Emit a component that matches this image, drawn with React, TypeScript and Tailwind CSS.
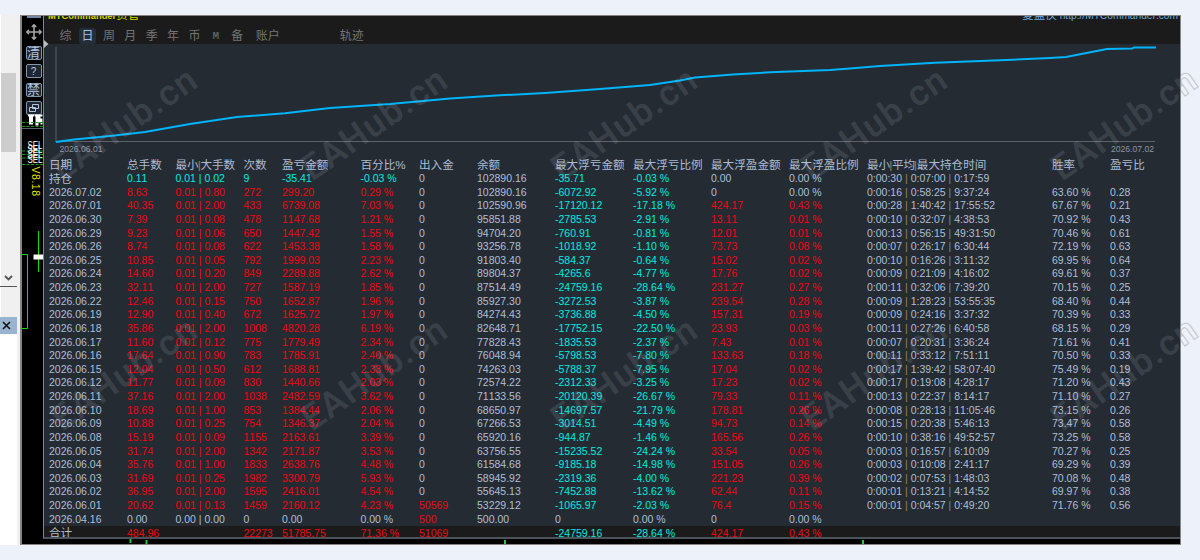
import React from "react";

const COLS =
  "grid grid-cols-[78px_48.5px_68px_38.5px_78.5px_58.5px_58px_78px_78px_78px_78px_78px_185px_58px_70px] pl-[5px] whitespace-nowrap";

const HEADERS = [
  "日期", "总手数", "最小|大手数", "次数", "盈亏金额", "百分比%", "出入金", "余额",
  "最大浮亏金额", "最大浮亏比例", "最大浮盈金额", "最大浮盈比例", "最小|平均|最大持仓时间", "胜率", "盈亏比",
];

// date, lots, max lot, trades, profit, percent, deposit, balance, dd, dd %, float profit, float %, time, win rate, ratio
const DATA = `2026.07.02,8.63,0.80,272,299.20,0.29,0,102890.16,-6072.92,-5.92,0,0.00,0:00:16|0:58:25|9:37:24,63.60,0.28
2026.07.01,40.35,2.00,433,6739.08,7.03,0,102590.96,-17120.12,-17.18,424.17,0.43,0:00:28|1:40:42|17:55:52,67.67,0.21
2026.06.30,7.39,0.08,478,1147.68,1.21,0,95851.88,-2785.53,-2.91,13.11,0.01,0:00:10|0:32:07|4:38:53,70.92,0.43
2026.06.29,9.23,0.06,650,1447.42,1.55,0,94704.20,-760.91,-0.81,12.01,0.01,0:00:13|0:56:15|49:31:50,70.46,0.61
2026.06.26,8.74,0.08,622,1453.38,1.58,0,93256.78,-1018.92,-1.10,73.73,0.08,0:00:07|0:26:17|6:30:44,72.19,0.63
2026.06.25,10.85,0.05,792,1999.03,2.23,0,91803.40,-584.37,-0.64,15.02,0.02,0:00:10|0:16:26|3:11:32,69.95,0.64
2026.06.24,14.60,0.20,849,2289.88,2.62,0,89804.37,-4265.6,-4.77,17.76,0.02,0:00:09|0:21:09|4:16:02,69.61,0.37
2026.06.23,32.11,2.00,727,1587.19,1.85,0,87514.49,-24759.16,-28.64,231.27,0.27,0:00:11|0:32:06|7:39:20,70.15,0.25
2026.06.22,12.46,0.15,750,1652.87,1.96,0,85927.30,-3272.53,-3.87,239.54,0.28,0:00:09|1:28:23|53:55:35,68.40,0.44
2026.06.19,12.90,0.40,672,1625.72,1.97,0,84274.43,-3736.88,-4.50,157.31,0.19,0:00:09|0:24:16|3:37:32,70.39,0.33
2026.06.18,35.86,2.00,1008,4820.28,6.19,0,82648.71,-17752.15,-22.50,23.93,0.03,0:00:11|0:27:26|6:40:58,68.15,0.29
2026.06.17,11.60,0.12,775,1779.49,2.34,0,77828.43,-1835.53,-2.37,7.43,0.01,0:00:07|0:20:31|3:36:24,71.61,0.41
2026.06.16,17.64,0.90,783,1785.91,2.40,0,76048.94,-5798.53,-7.80,133.63,0.18,0:00:11|0:33:12|7:51:11,70.50,0.33
2026.06.15,12.04,0.50,612,1688.81,2.33,0,74263.03,-5788.37,-7.95,17.04,0.02,0:00:17|1:39:42|58:07:40,75.49,0.19
2026.06.12,11.77,0.09,830,1440.66,2.03,0,72574.22,-2312.33,-3.25,17.23,0.02,0:00:17|0:19:08|4:28:17,71.20,0.43
2026.06.11,37.16,2.00,1038,2482.59,3.62,0,71133.56,-20120.39,-26.67,79.33,0.11,0:00:13|0:22:37|8:14:17,71.10,0.27
2026.06.10,18.69,1.00,853,1384.44,2.06,0,68650.97,-14697.57,-21.79,178.81,0.26,0:00:08|0:28:13|11:05:46,73.15,0.26
2026.06.09,10.88,0.25,754,1346.37,2.04,0,67266.53,-3014.51,-4.49,94.73,0.14,0:00:15|0:20:38|5:46:13,73.47,0.58
2026.06.08,15.19,0.09,1155,2163.61,3.39,0,65920.16,-944.87,-1.46,165.56,0.26,0:00:10|0:38:16|49:52:57,73.25,0.58
2026.06.05,31.74,2.00,1342,2171.87,3.53,0,63756.55,-15235.52,-24.24,33.54,0.05,0:00:03|0:16:57|6:10:09,70.27,0.25
2026.06.04,35.76,1.00,1833,2638.76,4.48,0,61584.68,-9185.18,-14.98,151.05,0.26,0:00:03|0:10:08|2:41:17,69.29,0.39
2026.06.03,31.69,0.25,1982,3300.79,5.93,0,58945.92,-2319.36,-4.00,221.23,0.39,0:00:02|0:07:53|1:48:03,70.08,0.48
2026.06.02,36.95,2.00,1595,2416.01,4.54,0,55645.13,-7452.88,-13.62,62.44,0.11,0:00:01|0:13:21|4:14:52,69.97,0.38
2026.06.01,20.62,0.13,1459,2160.12,4.23,50569,53229.12,-1065.97,-2.03,76.4,0.15,0:00:01|0:04:57|0:49:20,71.76,0.56`;

type Tone = "n" | "r" | "c";
const TONE: Record<Tone, string> = {
  n: "text-[#b0bfd6]",
  r: "text-[#ee0810]",
  c: "text-[#00ece0]",
};

const sign = (v: string): Tone => (parseFloat(v) === 0 ? "n" : v.startsWith("-") ? "c" : "r");

function Cell({ v, tone, cjk }: { v: string; tone: Tone; cjk?: boolean }) {
  return <span className={`${TONE[tone]} ${cjk ? "text-[11.6px]" : ""}`}>{v}</span>;
}

function Duration({ v }: { v: string }) {
  const [a, b, c] = v.split("|");
  return (
    <span className={TONE.n}>
      {a} <i className="not-italic text-[#a08054]">|</i> {b} <i className="not-italic text-[#5d8fc0]">|</i> {c}
    </span>
  );
}

function DayRow({ line }: { line: string }) {
  const f = line.split(",");
  return (
    <div className={`${COLS} h-[13.64px]`}>
      <Cell v={f[0]} tone="n" />
      <Cell v={f[1]} tone="r" />
      <Cell v={`0.01 | ${f[2]}`} tone="r" />
      <Cell v={f[3]} tone="r" />
      <Cell v={f[4]} tone="r" />
      <Cell v={`${f[5]} %`} tone="r" />
      <Cell v={f[6]} tone={sign(f[6])} />
      <Cell v={f[7]} tone="n" />
      <Cell v={f[8]} tone="c" />
      <Cell v={`${f[9]} %`} tone="c" />
      <Cell v={f[10]} tone={sign(f[10])} />
      <Cell v={`${f[11]} %`} tone={sign(f[11])} />
      <Duration v={f[12]} />
      <Cell v={`${f[13]} %`} tone="n" />
      <Cell v={f[14]} tone="n" />
    </div>
  );
}

function Tabs() {
  const tab = "flex h-[16px] w-[17px] items-center justify-center rounded-[3px]";
  return (
    <div className="flex h-[28px] items-end bg-[#1b1b1b] text-[12px] leading-[16px] text-[#747474]">
      <div className="flex w-full items-center pl-[13px]">
        <span className={tab}>综</span>
        <span className={`${tab} ml-[5px] bg-[#242e3b] text-[#a9c0e4]`}>日</span>
        {["周", "月", "季", "年", "币", "M", "备"].map((t) => (
          <span
            key={t}
            className={`${tab} ml-[4.4px] ${t === "M" ? "font-mono text-[11px] font-bold text-[#56616a]" : ""}`}
          >
            {t}
          </span>
        ))}
        <span className="ml-[10px]">账户</span>
        <span className="ml-[60px]">轨迹</span>
      </div>
    </div>
  );
}

function Chart() {
  return (
    <div className="relative h-[113.5px] shrink-0">
      <svg width="1136" height="113" viewBox="44 44 1136 113" className="block">
        <path d="M56 47V142" stroke="#4d5055" strokeWidth="1.4" />
        <path d="M55 141.5H1155" stroke="#5f6168" strokeWidth="1.2" />
        <polyline
          fill="none"
          stroke="#00b4fa"
          strokeWidth="2"
          points="56,142 74,139.5 110,136 145,132 190,124 237,117 285,113.3 330,108 390,104 450,98.5 500,95.3 545,93 600,89 650,85 680,80.5 695,77.5 733,74.5 770,72.3 830,70 850,68.5 880,66 935,62.7 1000,60.3 1050,58 1066,57 1107,49 1132,48.6 1134,47.5 1156,47.5"
        />
      </svg>
      <div className="absolute inset-x-0 bottom-[4px] flex justify-between pl-[15.5px] pr-[26px] text-[8.6px] leading-[10px] text-[#8b95a3]">
        <span>2026.06.01</span>
        <span>2026.07.02</span>
      </div>
    </div>
  );
}

function Table() {
  return (
    <div className="text-[10.5px] leading-[13.64px]">
      <div className={`${COLS} h-[14.5px] text-[11.6px] leading-[13px] text-[#acbbd3]`}>
        {HEADERS.map((h) => (
          <span key={h}>
            {h.split("|").map((p, i) => (
              <React.Fragment key={p}>
                {i > 0 && (
                  <i className={`inline-block w-[1.7px] not-italic ${i === 1 ? "text-[#a08054]" : "text-[#5d8fc0]"}`}>
                    <span className="-ml-px">|</span>
                  </i>
                )}
                {p}
              </React.Fragment>
            ))}
          </span>
        ))}
      </div>
      <div className={`${COLS} h-[13.64px]`}>
        <Cell v="持仓" tone="n" cjk />
        <Cell v="0.11" tone="c" />
        <Cell v="0.01 | 0.02" tone="c" />
        <Cell v="9" tone="c" />
        <Cell v="-35.41" tone="c" />
        <Cell v="-0.03 %" tone="c" />
        <Cell v="0" tone="n" />
        <Cell v="102890.16" tone="n" />
        <Cell v="-35.71" tone="c" />
        <Cell v="-0.03 %" tone="c" />
        <Cell v="0.00" tone="n" />
        <Cell v="0.00 %" tone="n" />
        <Duration v="0:00:30|0:07:00|0:17:59" />
      </div>
      {DATA.split("\n").map((l) => (
        <DayRow key={l} line={l} />
      ))}
      <div className={`${COLS} h-[13.4px]`}>
        <Cell v="2026.04.16" tone="n" />
        <Cell v="0.00" tone="n" />
        <Cell v="0.00 | 0.00" tone="n" />
        <Cell v="0" tone="n" />
        <Cell v="0.00" tone="n" />
        <Cell v="0.00 %" tone="n" />
        <Cell v="500" tone="r" />
        <Cell v="500.00" tone="n" />
        <Cell v="0" tone="n" />
        <Cell v="0.00 %" tone="n" />
        <Cell v="0" tone="n" />
        <Cell v="0.00 %" tone="n" />
      </div>
      <div className={`${COLS} h-[14px] bg-[#1b1b1b] leading-[14.5px]`}>
        <Cell v="合计" tone="n" cjk />
        <Cell v="484.96" tone="r" />
        <span />
        <Cell v="22273" tone="r" />
        <Cell v="51785.75" tone="r" />
        <Cell v="71.36 %" tone="r" />
        <Cell v="51069" tone="r" />
        <span />
        <Cell v="-24759.16" tone="c" />
        <Cell v="-28.64 %" tone="c" />
        <Cell v="424.17" tone="r" />
        <Cell v="0.43 %" tone="r" />
      </div>
    </div>
  );
}

function LeftPane() {
  return (
    <div className="flex w-[20px] shrink-0 bg-[#f0f0f0]">
      <div className="w-px bg-white" />
      <div className="flex w-[15.5px] flex-col">
        <div className="h-[58px]" />
        <div className="mr-px h-[79px] bg-[#cdcdcd]" />
        <div className="flex flex-1 items-end justify-center pb-[5px]">
          <svg width="9" height="6" viewBox="0 0 9 6">
            <path d="M1 1l3.5 3.5L8 1" fill="none" stroke="#555" strokeWidth="1.9" />
          </svg>
        </div>
        <div className="-ml-px h-px bg-[#555]" />
        <div className="h-[30px]" />
        <div className="-ml-px flex h-[17px] items-center justify-center bg-[#99b4d1]">
          <svg width="9" height="9" viewBox="0 0 9 9" className="-ml-[3px]">
            <path d="M1 1l7 7M8 1L1 8" stroke="#111" strokeWidth="1.6" />
          </svg>
        </div>
        <div className="h-[211px] bg-white" />
      </div>
    </div>
  );
}

function ToolButton({ children }: { children: React.ReactNode }) {
  return (
    <div className="mb-[4.5px] flex h-[14px] w-[16px] items-center justify-center rounded-[2px] border border-[#8496ad] bg-[#1d2632] text-[13px] leading-[13px] text-[#b4c8e4]">
      {children}
    </div>
  );
}

function ToolStrip() {
  return (
    <div className="relative flex w-[21px] shrink-0 flex-col items-center overflow-hidden bg-black pl-[2px]">
      <div className="h-[2px] w-[14px] shrink-0 bg-[#7187a5]" />
      <svg width="16" height="16" viewBox="0 0 16 16" className="mt-[6px] mb-[5.5px] shrink-0">
        <path
          d="M8 1v14M1 8h14M5.800 3L8 .8 10.200 3M5.800 13L8 15.200 10.200 13M3 5.800L.8 8 3 10.200M13 5.800L15.200 8 13 10.200"
          fill="none"
          stroke="#a4a4a4"
          strokeWidth="1.6"
        />
      </svg>
      <ToolButton>清</ToolButton>
      <ToolButton><span className="text-[10px]">?</span></ToolButton>
      <ToolButton>禁</ToolButton>
      <ToolButton>
        <svg width="10" height="10" viewBox="0 0 10 10">
          <path d="M3.500 1.500h6v4h-6zM.5 4.500h6v4h-6z" fill="#1d2632" stroke="#b4c8e4" />
        </svg>
      </ToolButton>
      <svg width="21" height="430" viewBox="22 114 21 430" className="absolute top-[98px] left-0">
        <path d="M28 114.500h6v2h-1v8h-4v-8h-1zM34.500 114.500h8v2h-2v2h2v6h-2v-2h-2v3h-3v-9h-1z" fill="#fff" />
        <path d="M22 122.500h21M22 126.500h21M22 151h21M22 154.500h21M22 158h21M22 164.500h21" stroke="#149c14" strokeDasharray="3 1.500" />
        <path d="M22 128.500h21" stroke="#56616e" />
        <g className="fill-white text-[10px]">
          {[149, 153, 158, 162.5].map((y) => (
            <text key={y} x="27.500" y={y} textLength="15" lengthAdjust="spacingAndGlyphs">SEL</text>
          ))}
        </g>
        <text transform="translate(32 166.500) rotate(90)" textLength="29.500" className="fill-[#e6e600] text-[10.5px]">V8.18</text>
        <path d="M38.500 231v41M22 254.500h5.500v74H22" fill="none" stroke="#00e400" />
        <path d="M33.500 254.500h10v5h-10z" fill="#fff" />
      </svg>
    </div>
  );
}

function Watermarks() {
  const xs = [-188, 62, 312, 562, 812, 1062];
  return (
    <svg width="1200" height="560" className="pointer-events-none absolute inset-0 font-[Roboto]">
      <defs>
        <clipPath id="inside"><path d="M44 16h1137v528H44z" /></clipPath>
        <clipPath id="outside"><path d="M1181 0h19v560h-19z" /></clipPath>
      </defs>
      {[182, 432].map((y) =>
        xs.map((x) => (
          <g key={`${x}-${y}`} clipPath="url(#inside)">
            <text
              transform={`translate(${x} ${y}) rotate(-35)`}
              textLength="168"
              className="fill-[#d8d8e0]/12 text-[36px] font-semibold"
            >
              EAHub.cn
            </text>
          </g>
        ))
      )}
      <g clipPath="url(#outside)" aria-hidden="true">
        {[182, 432].map((y) => (
          <text
            key={y}
            transform={`translate(1062 ${y}) rotate(-35)`}
            textLength="168"
            className="fill-[#edf1fa] stroke-[#c4c5ca] text-[36px] font-semibold"
            strokeWidth="1"
          >
            EAHub.cn
          </text>
        ))}
      </g>
    </svg>
  );
}

export default function App() {
  return (
    <div className="relative h-[560px] w-[1200px] overflow-hidden bg-[#edf1fa] py-[15px] font-['Liberation_Sans','Noto_Sans_CJK_SC',sans-serif] [font-kerning:none]">
      <div className="flex h-[530px] w-[1181px]">
        <LeftPane />
        <div className="flex min-w-0 flex-1 border-y border-r border-l-2 border-[#858585]">
          <ToolStrip />
          <div className="flex min-w-0 flex-1 flex-col bg-black">
            <div className="relative flex h-[524px] flex-col overflow-hidden border-b-2 border-l border-b-[#4a525c] border-l-[#7c8794] bg-[#242b33]">
              <div className="relative">
                <Tabs />
                <div className="absolute inset-x-0 -top-[8px] flex justify-between pr-[2px] pl-[4px] leading-[14px] whitespace-nowrap">
                  <span className="text-[9.4px] font-bold text-[#d6d600]">MTCommander<span className="text-[11.5px] font-normal">资管</span></span>
                  <span className="text-[10.2px] text-[#6fa8d8]"><span className="text-[11.5px]">复盘侠</span> http://MTCommander.com</span>
                </div>
              </div>
              <Chart />
              <Table />
              <svg width="5" height="8" className="absolute top-[24px] left-0">
                <path d="M0 0l4.500 4L0 8z" fill="#bbb" />
              </svg>
            </div>
            <svg width="1136" height="5" className="block">
              <path d="M87.500 0v4M103.500 1v4M462 1v4M820 1v4" stroke="#2fc23c" strokeWidth="2" />
            </svg>
          </div>
        </div>
      </div>
      <Watermarks />
    </div>
  );
}
